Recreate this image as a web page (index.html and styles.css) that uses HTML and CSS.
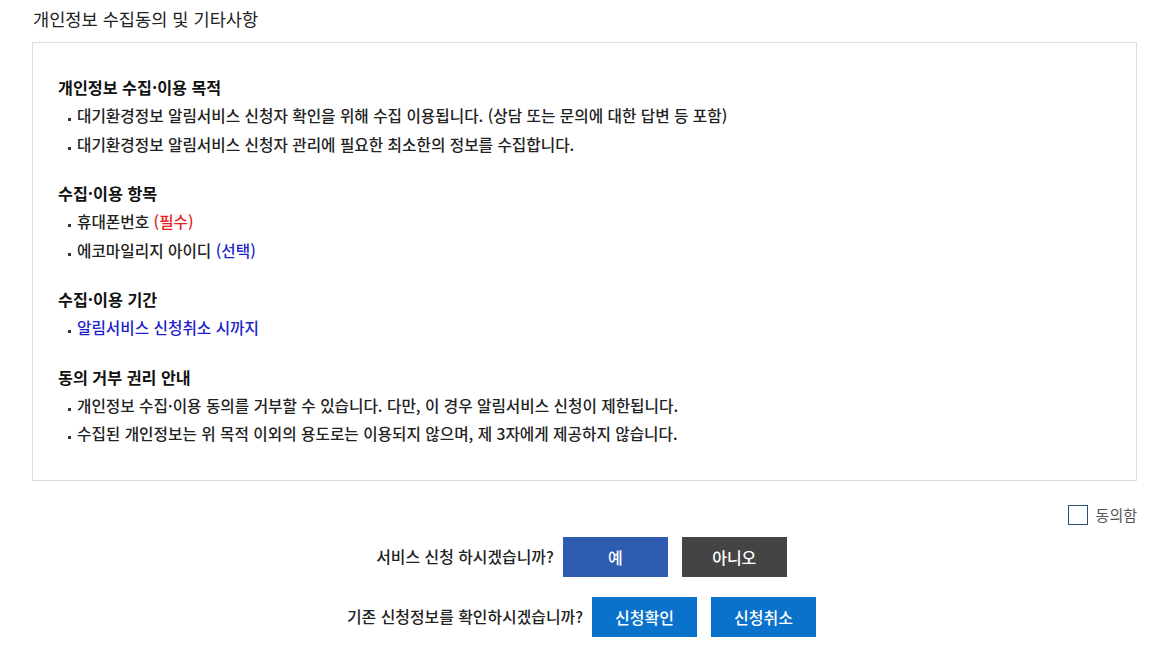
FILE: index.html
```html
<!DOCTYPE html>
<html lang="ko">
  <head>
    <meta charset="utf-8">
    <title>개인정보 수집동의 및 기타사항</title>
    <link rel="stylesheet" href="styles.css">
  </head>
  <body>
    <div class="wrap">
      <h2 class="title">개인정보 수집동의 및 기타사항</h2>

      <div class="agreeBox">
        <div class="section">
          <h3>개인정보 수집·이용 목적</h3>
          <ul class="items">
            <li>대기환경정보 알림서비스 신청자 확인을 위해 수집 이용됩니다. (상담 또는 문의에 대한 답변 등 포함)</li>
            <li>대기환경정보 알림서비스 신청자 관리에 필요한 최소한의 정보를 수집합니다.</li>
          </ul>
        </div>
        <div class="section">
          <h3>수집·이용 항목</h3>
          <ul class="items">
            <li>휴대폰번호 <span class="red">(필수)</span></li>
            <li>에코마일리지 아이디 <span class="blue">(선택)</span></li>
          </ul>
        </div>
        <div class="section">
          <h3>수집·이용 기간</h3>
          <ul class="items">
            <li><span class="blue">알림서비스 신청취소 시까지</span></li>
          </ul>
        </div>
        <div class="section">
          <h3>동의 거부 권리 안내</h3>
          <ul class="items">
            <li>개인정보 수집·이용 동의를 거부할 수 있습니다. 다만, 이 경우 알림서비스 신청이 제한됩니다.</li>
            <li>수집된 개인정보는 위 목적 이외의 용도로는 이용되지 않으며, 제 3자에게 제공하지 않습니다.</li>
          </ul>
        </div>
      </div>

      <div class="agreeCheck">
        <label><input type="checkbox" class="chk"> 동의함</label>
      </div>

      <div class="askRow">
        <span class="ask">서비스 신청 하시겠습니까?</span>
        <button class="btn btnYes">예</button>
        <button class="btn btnNo">아니오</button>
      </div>
      <div class="askRow">
        <span class="ask">기존 신청정보를 확인하시겠습니까?</span>
        <button class="btn btnBlue">신청확인</button>
        <button class="btn btnBlue">신청취소</button>
      </div>
    </div>
  </body>
</html>
```

FILE: styles.css
```css
body { margin: 0; background: #fff; color: #222; font-family: "Noto Sans CJK KR", "Noto Sans", sans-serif; }

.wrap { margin-left: 32px; width: 1105px; }
.title { margin: 6px 0 11px 1px; font-size: 17.6px; font-weight: 400; line-height: 25px; color: #222; }

.agreeBox { border: 1px solid #ddd; padding: 30px 25px 31px; }
.section + .section { margin-top: 20px; }
.section h3 { margin: 0; font-size: 16.2px; font-weight: 700; line-height: 29px; color: #111; }
.items { list-style: none; margin: 0; padding: 0; }
.items li { position: relative; padding-left: 19px; font-size: 15.7px; font-weight: 500; line-height: 28.5px; color: #222; }
.items li::before { content: ""; position: absolute; left: 10px; top: 16px; width: 3px; height: 3px; background: #333; }
.red { color: #e31e1e; }
.blue { color: #1f1fcc; }

.agreeCheck { display: flex; justify-content: flex-end; margin-top: 23px; }
.agreeCheck label { display: flex; align-items: center; gap: 8px; font-size: 15px; color: #555; line-height: 22px; }
.chk { appearance: none; margin: 0; width: 20px; height: 20px; border: 1.5px solid #2d4f7c; background: #fff; box-sizing: border-box; }

.askRow { display: flex; justify-content: center; align-items: center; margin-top: 11px; padding-right: 6px; }
.askRow + .askRow { margin-top: 20px; }
.ask { font-size: 15.9px; font-weight: 500; color: #222; margin-right: 9px; }
.btn { width: 105px; height: 40px; border: none; color: #fff; font-family: inherit; font-size: 16px; font-weight: 500; padding: 0; }
.btn + .btn { margin-left: 14px; }
.btnYes { background: #2d5cb0; }
.btnNo { background: #444; }
.btnBlue { background: #0b72cb; }
```
